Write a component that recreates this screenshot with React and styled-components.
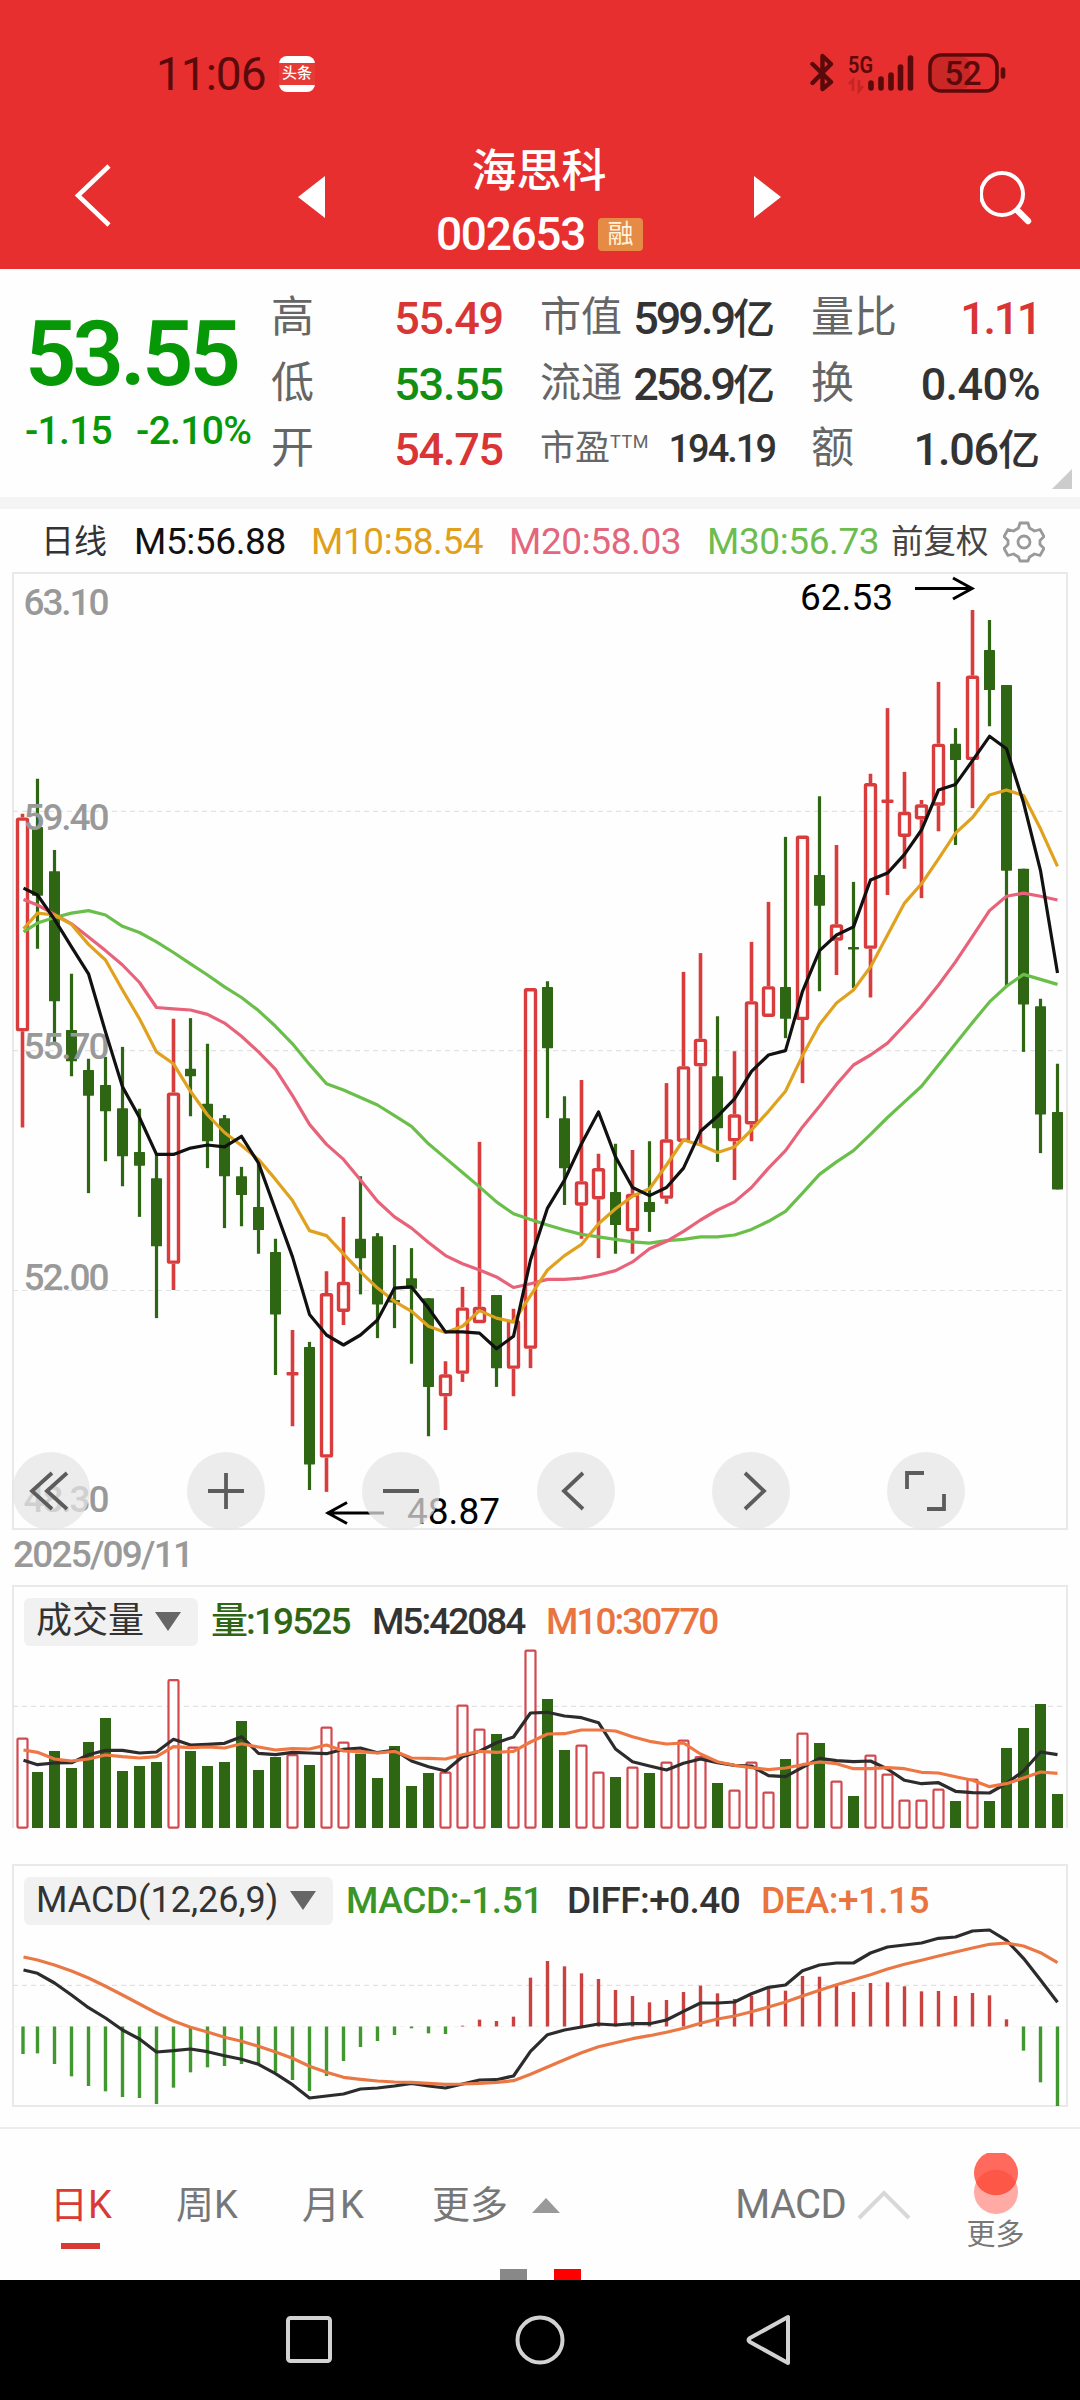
import React from 'react'
import styled, { createGlobalStyle } from 'styled-components'

// 1 = up day (hollow red), 0 = down day (solid green)
// [up, high, low, bodyTop, bodyBottom]
const candles = [
    [1, 406, 908, 412, 754], [0, 350, 622, 427, 537], [0, 464, 772, 498, 706], [0, 662, 826, 752, 802],
    [0, 798, 1013, 816, 857], [0, 795, 962, 840, 882], [0, 779, 1002, 877, 954], [0, 878, 1051, 947, 969],
    [0, 950, 1213, 989, 1098], [1, 734, 1168, 852, 1126], [0, 733, 890, 814, 826], [0, 774, 973, 870, 930],
    [0, 888, 1069, 893, 986], [0, 971, 1066, 986, 1016], [0, 965, 1110, 1035, 1072], [0, 1086, 1304, 1107, 1207],
    [1, 1232, 1386, 1302, 1302], [0, 1251, 1488, 1259, 1447], [1, 1138, 1491, 1173, 1436], [1, 1051, 1224, 1155, 1203],
    [0, 986, 1175, 1086, 1117], [0, 1077, 1245, 1082, 1191], [0, 1096, 1229, 1184, 1188], [0, 1101, 1286, 1149, 1166],
    [0, 1181, 1402, 1181, 1323], [1, 1282, 1392, 1303, 1338], [1, 1163, 1315, 1196, 1302], [1, 931, 1221, 1195, 1221],
    [0, 1176, 1323, 1176, 1293], [1, 1198, 1338, 1216, 1294], [1, 685, 1293, 685, 1262], [0, 674, 893, 683, 781],
    [0, 858, 1032, 893, 973], [1, 832, 1086, 994, 1033], [1, 950, 1117, 973, 1023], [0, 934, 1110, 1011, 1064],
    [1, 944, 1110, 1014, 1074], [0, 930, 1075, 1027, 1043], [1, 837, 1030, 927, 1022], [1, 659, 930, 810, 931],
    [1, 629, 936, 766, 810], [0, 730, 963, 826, 909], [1, 786, 992, 887, 930], [1, 611, 930, 706, 903],
    [1, 547, 731, 682, 731], [0, 443, 765, 683, 734], [1, 441, 837, 441, 736], [0, 378, 690, 504, 553],
    [1, 456, 664, 583, 609], [0, 515, 685, 619, 623], [1, 342, 700, 357, 622], [1, 237, 536, 386, 386],
    [1, 339, 494, 403, 443], [1, 384, 541, 391, 415], [1, 195, 434, 294, 393], [0, 269, 456, 294, 320],
    [1, 80, 397, 185, 320], [0, 96, 266, 144, 208], [0, 200, 683, 200, 497], [0, 494, 787, 494, 711],
    [0, 702, 949, 714, 887], [0, 806, 1007, 883, 1007],
]

const ma5 = [525, 536, 575, 619, 662, 755, 843, 892, 951, 951, 941, 936, 939, 922, 965, 1040, 1115, 1207, 1240, 1256, 1240, 1216, 1165, 1163, 1197, 1235, 1235, 1237, 1262, 1242, 1120, 1037, 992, 934, 883, 955, 1004, 1017, 1004, 973, 914, 890, 862, 818, 792, 785, 690, 625, 600, 587, 512, 501, 471, 432, 368, 359, 321, 282, 302, 388, 497, 661]
const ma10 = [590, 565, 568, 583, 615, 640, 688, 734, 787, 806, 850, 888, 916, 937, 959, 991, 1025, 1073, 1081, 1110, 1139, 1165, 1186, 1202, 1226, 1236, 1226, 1201, 1213, 1219, 1177, 1136, 1113, 1095, 1062, 1038, 1018, 1006, 968, 928, 936, 948, 939, 912, 882, 850, 793, 743, 709, 688, 651, 600, 549, 518, 478, 437, 412, 376, 368, 377, 430, 490]
const ma20 = [543, 552, 567, 582, 603, 625, 648, 676, 716, 718, 720, 727, 741, 762, 787, 815, 857, 903, 935, 959, 992, 1026, 1051, 1069, 1092, 1113, 1126, 1136, 1147, 1164, 1158, 1151, 1151, 1149, 1144, 1137, 1123, 1102, 1090, 1074, 1056, 1040, 1027, 1004, 973, 945, 907, 874, 839, 808, 792, 773, 744, 714, 680, 643, 602, 561, 538, 533, 538, 544]
const ma30 = [595, 581, 572, 565, 561, 568, 586, 596, 611, 628, 646, 664, 683, 700, 721, 746, 774, 807, 838, 848, 860, 872, 889, 906, 934, 957, 980, 1003, 1027, 1046, 1055, 1064, 1072, 1079, 1083, 1087, 1091, 1093, 1089, 1087, 1083, 1083, 1080, 1071, 1058, 1042, 1013, 983, 963, 945, 919, 892, 867, 842, 808, 774, 740, 707, 682, 663, 671, 679]

const volumes = [475, 576, 513, 564, 486, 414, 573, 558, 546, 300, 513, 558, 546, 423, 570, 531, 525, 555, 442, 487, 521, 594, 498, 618, 579, 577, 376, 448, 462, 502, 211, 357, 510, 496, 577, 591, 562, 579, 547, 481, 531, 609, 631, 547, 637, 537, 460, 489, 604, 648, 526, 583, 661, 661, 628, 663, 598, 663, 504, 444, 372, 642]
const vol5 = [541, 554, 549, 548, 524, 511, 511, 519, 516, 478, 495, 493, 490, 470, 520, 524, 517, 519, 521, 508, 504, 518, 510, 543, 560, 573, 530, 514, 488, 471, 399, 397, 408, 413, 428, 507, 545, 558, 570, 550, 537, 548, 556, 558, 587, 590, 562, 535, 542, 545, 543, 567, 601, 611, 608, 634, 638, 639, 610, 573, 516, 524]
const vol10 = [510, 517, 537, 543, 537, 525, 530, 534, 530, 500, 503, 501, 504, 491, 501, 510, 506, 507, 495, 513, 515, 519, 514, 534, 535, 537, 524, 514, 517, 514, 486, 462, 461, 450, 450, 453, 470, 484, 492, 489, 522, 545, 556, 563, 569, 564, 554, 546, 551, 566, 566, 563, 566, 577, 579, 590, 601, 620, 611, 594, 576, 580]

const macd = [612, 610, 642, 679, 708, 724, 741, 744, 762, 713, 667, 652, 648, 642, 645, 667, 690, 723, 678, 633, 591, 573, 555, 535, 550, 552, 527, 509, 513, 500, 383, 333, 349, 370, 387, 420, 438, 457, 450, 426, 407, 430, 447, 437, 415, 422, 378, 380, 403, 426, 399, 397, 409, 424, 423, 438, 429, 436, 508, 602, 697, 768]
const diff = [360, 370, 399, 435, 473, 504, 540, 567, 606, 602, 597, 605, 617, 628, 643, 671, 704, 744, 738, 732, 717, 714, 708, 700, 708, 714, 702, 690, 689, 678, 604, 554, 540, 531, 522, 525, 521, 521, 510, 484, 459, 459, 456, 431, 412, 405, 362, 345, 339, 339, 309, 291, 285, 279, 265, 261, 243, 240, 271, 325, 390, 457]
const dea = [321, 330, 345, 363, 384, 409, 435, 462, 489, 513, 532, 546, 562, 574, 589, 606, 625, 649, 667, 682, 688, 693, 696, 697, 700, 703, 702, 700, 697, 692, 673, 651, 629, 608, 590, 578, 566, 557, 547, 535, 520, 507, 498, 485, 471, 456, 438, 421, 404, 389, 374, 357, 343, 331, 318, 306, 294, 283, 279, 288, 308, 338]

const RED = '#d93c3c'
const GREEN = '#2f6614'

// the first day sits a little closer to its neighbour than the rest
const dayX = i => (i === 0 ? 22.5 : 20.5 + 17 * i)
const priceY = v => v * 0.625 - 12
const volY = v => v / 3 - 5
const macdY = v => v / 3 - 14

const points = (data, toY) => data.map((v, i) => `${i === 0 ? 23.5 : dayX(i)},${toY(v).toFixed(1)}`).join(' ')

const Line = ({ data, toY, color }) => (
    <polyline points={points(data, toY)} fill="none" stroke={color} strokeWidth="3.2" strokeLinejoin="round" />
)

const Grid = ({ y }) => <line x1="13" x2="1064" y1={y} y2={y} stroke="#e2e2e2" strokeWidth="1.2" strokeDasharray="5 4" />

const Candle = ({ i, data }) => {
    const [up, high, low, top, bottom] = data
    const x = dayX(i)
    const [h, l, t, b] = [high, low, top, bottom].map(priceY)
    if (!up) {
        return (
            <g fill={GREEN}>
                <rect x={x - 1.6} y={h} width="3.2" height={l - h} />
                <rect x={x - 5.5} y={t} width="11" height={b - t} rx=".6" />
            </g>
        )
    }
    if (top === bottom) {
        return (
            <g fill={RED}>
                <rect x={x - 1.8} y={h} width="3.6" height={l - h} />
                <rect x={x - 6} y={t - 1.7} width="12" height="3.4" rx="1" />
            </g>
        )
    }
    return (
        <g>
            <rect x={x - 1.8} y={h} width="3.6" height={t - h} fill={RED} />
            <rect x={x - 1.8} y={b} width="3.6" height={Math.max(0, l - b)} fill={RED} />
            <rect x={x - 5} y={t + 1.6} width="10" height={b - t - 3.2} rx="1" fill="none" stroke={RED} strokeWidth="3.4" />
        </g>
    )
}

const PriceLabel = ({ x = 23.5, y, children, color = '#999', weight = 500, length = 86 }) => (
    <text x={x} y={y} fontSize="37" fontWeight={weight} fill={color} textLength={length}>{children}</text>
)

const PriceChart = () => (
    <Chart width="1080" height="959" viewBox="0 0 1080 959">
        <rect x="13" y="1" width="1054" height="956" fill="none" stroke="#e9e9e9" strokeWidth="2" />
        <Grid y={239.3} />
        <Grid y={478.7} />
        <Grid y={718.5} />
        {candles.map((c, i) => <Candle key={i} i={i} data={c} />)}
        <PriceLabel y={43}>63.10</PriceLabel>
        <PriceLabel y={257.5}>59.40</PriceLabel>
        <PriceLabel y={486.5}>55.70</PriceLabel>
        <PriceLabel y={718}>52.00</PriceLabel>
        <PriceLabel y={940}>48.30</PriceLabel>
        <Line data={ma30} toY={priceY} color="#6abf4b" />
        <Line data={ma20} toY={priceY} color="#e8637a" />
        <Line data={ma10} toY={priceY} color="#e0a21e" />
        <Line data={ma5} toY={priceY} color="#111" />
        <PriceLabel x={800} y={38} color="#000" weight={400} length={93}>62.53</PriceLabel>
        <path d="M915 16.5h57M953 6l19 10.5-19 10.5" fill="none" stroke="#000" strokeWidth="3" />
        <PriceLabel x={407} y={951.5} color="#000" weight={400} length={93}>48.87</PriceLabel>
        <path d="M384 941h-57M347 930.5l-19 10.5 19 10.5" fill="none" stroke="#000" strokeWidth="3" />
    </Chart>
)

const VolumeChart = () => (
    <Chart width="1080" height="245" viewBox="0 0 1080 245">
        <path d="M13 243V1H1067V243" fill="none" stroke="#e9e9e9" strokeWidth="2" />
        <Grid y={121.3} />
        {volumes.map((v, i) => {
            const up = candles[i][0]
            const y = volY(v)
            return up
                ? <rect key={i} x={dayX(i) - 5} y={y + 0.2} width="10" height={242.4 - y} rx="1" fill="#fff" stroke="#d14a50" strokeWidth="2.2" />
                : <rect key={i} x={dayX(i) - 5.5} y={y} width="11" height={243 - y} fill={GREEN} />
        })}
        <Line data={vol5} toY={volY} color="#2c2c2c" />
        <Line data={vol10} toY={volY} color="#ee7743" />
    </Chart>
)

const MacdChart = () => (
    <Chart width="1080" height="243" viewBox="0 0 1080 243">
        <rect x="13" y="1" width="1054" height="241" fill="none" stroke="#e9e9e9" strokeWidth="2" />
        <Grid y={121.3} />
        <line x1="13" x2="1064" y1="162.5" y2="162.5" stroke="#f3f3f3" strokeWidth="1" strokeDasharray="5 4" />
        {macd.map((v, i) => {
            const y = macdY(v)
            const x = i === 0 ? 23 : dayX(i)
            return <rect key={i} x={x - 1.7} y={Math.min(y, 162.5)} width="3.4" height={Math.abs(y - 162.5)} fill={v > 530 ? '#429830' : '#c9423f'} />
        })}
        <Line data={diff} toY={macdY} color="#2c2c2c" />
        <Line data={dea} toY={macdY} color="#e97845" />
    </Chart>
)

const StatusIcons = () => (
    <svg width="204" height="44" viewBox="0 0 204 44" fill="none" stroke="#5a0a0b">
        <path d="M2.5 12L21 30L12.500 37V23M12.500 19V4L21 12L2.500 31" strokeWidth="4.4" strokeLinejoin="round" strokeLinecap="round" />
        <text x="38" y="20.500" fontSize="24" fontWeight="600" fill="#5a0a0b" stroke="none" textLength="25" lengthAdjust="spacingAndGlyphs">5G</text>
        <path d="M39 32l4-4v11M49 28v11l4-5" strokeWidth="2.6" opacity=".25" />
        <path d="M61 31v5M71 27v9M81 23v13M90.5 15v21M100.5 6v30" strokeWidth="5.6" strokeLinecap="round" />
        <rect x="122" y="5" width="38" height="32" rx="8" fill="#5a0a0b" opacity=".2" stroke="none" />
        <rect x="120" y="3" width="67" height="36" rx="11" strokeWidth="3.6" />
        <path d="M193 17.5v7" strokeWidth="4.6" strokeLinecap="round" />
        <text x="134.500" y="33" fontSize="33" fontWeight="500" fill="#5a0a0b" stroke="none" textLength="37">52</text>
    </svg>
)

const Gear = () => (
    <svg width="42" height="42" viewBox="0 0 42 42" fill="none" stroke="#999" strokeWidth="2.8" strokeLinejoin="round">
        <path d="M17 2h8l1.500 5 5 3 5.500-1.500 4 7-4 4v4l4 4-4 7-5.500-1.500-5 3L25 40h-8l-1.500-4-5-3L5 34.500l-4-7 4-4v-4l-4-4 4-7L10.500 10l5-3z" />
        <circle cx="21" cy="21" r="6" />
    </svg>
)

const chartButtons = [
    'M40 -18L20 0L40 18M55 -18L35 0L55 18',
    'M21 0H57M39 -18V18',
    'M21 0H57',
    'M46 -18L27 0L46 18',
    'M33 -18L52 0L33 18',
    'M20 -2V-18H37M57 3V18H40',
]

const tabs = ['日K', '周K', '月K']

const App = () => (
    <Page>
        <GlobalStyle />
        <Header>
            <StatusBar>
                <Clock>11:06</Clock>
                <NewsIcon><NewsBand>头条</NewsBand></NewsIcon>
                <Spacer />
                <StatusIcons />
            </StatusBar>
            <TitleBar>
                <svg width="40" height="66" viewBox="0 0 40 66" fill="none" stroke="#fff" strokeWidth="4.5"><path d="M36 3L5 32.500L36 62" /></svg>
                <svg width="27" height="42" viewBox="0 0 27 42"><path d="M27 0v42L0 21z" fill="#fff" /></svg>
                <TitleText>
                    <StockName>海思科</StockName>
                    <CodeRow><Code>002653</Code><Badge>融</Badge></CodeRow>
                </TitleText>
                <svg width="27" height="42" viewBox="0 0 27 42"><path d="M0 0v42l27-21z" fill="#fff" /></svg>
                <svg width="56" height="58" viewBox="0 0 56 58" fill="none" stroke="#fff">
                    <circle cx="22" cy="24" r="21" strokeWidth="4" />
                    <path d="M38 41l10 10" strokeWidth="6.4" strokeLinecap="round" />
                </svg>
            </TitleBar>
        </Header>

        <Quote>
            <Current>
                <BigPrice>53.55</BigPrice>
                <Change><span>-1.15</span><span>-2.10%</span></Change>
            </Current>
            <QuoteTable>
                <Label>高</Label><Value $color="#d93535">55.49</Value>
                <Label $size={41}>市值</Label><Value $spacing={-3}>599.9<Unit>亿</Unit></Value>
                <Label>量比</Label><Value $color="#d93535" $spacing={-2.4}>1.11</Value>
                <Label>低</Label><Value $color="#128f12">53.55</Value>
                <Label $size={41}>流通</Label><Value $spacing={-3}>258.9<Unit>亿</Unit></Value>
                <Label>换</Label><Value $spacing={-0.6}>0.40%</Value>
                <Label>开</Label><Value $color="#d93535">54.75</Value>
                <Label $size={35}>市盈<Ttm>TTM</Ttm></Label><Value $size={38} $spacing={-2}>194.19</Value>
                <Label>额</Label><Value $spacing={-1.2}>1.06<Unit>亿</Unit></Value>
            </QuoteTable>
            <Corner />
        </Quote>

        <AverageRow>
            <Average $color="#333" $size={33}>日线</Average>
            <Average $color="#111">M5:56.88</Average>
            <Average $color="#e0a01a">M10:58.54</Average>
            <Average $color="#e3667c">M20:58.03</Average>
            <Average $color="#6cbd4e">M30:56.73</Average>
            <Average $color="#444" $size={32.5}>前复权</Average>
            <Gear />
        </AverageRow>

        <ChartPanel $height={959}>
            <PriceChart />
            <ButtonBar>
                {chartButtons.map(d => (
                    <RoundButton key={d}>
                        <svg width="78" height="78" viewBox="0 -39 78 78" fill="none" stroke="#5c5c5c" strokeWidth="3.8"><path d={d} /></svg>
                    </RoundButton>
                ))}
            </ButtonBar>
        </ChartPanel>
        <DateRow>2025/09/11</DateRow>

        <ChartPanel $height={279}>
            <VolumeChart />
            <Indicators>
                <Select $width={174}>成交量<Caret /></Select>
                <Indicator $color={GREEN} $width={161} $spacing={-1.9}>量:19525</Indicator>
                <Indicator $color="#333" $width={174} $spacing={-2}>M5:42084</Indicator>
                <Indicator $color="#ea7440" $spacing={-2}>M10:30770</Indicator>
            </Indicators>
        </ChartPanel>
        <ChartPanel $height={263}>
            <MacdChart />
            <Indicators>
                <Select $width={309}>MACD(12,26,9)<Caret /></Select>
                <Indicator $color="#3a9428" $width={221} $spacing={-0.4}>MACD:-1.51</Indicator>
                <Indicator $color="#333" $width={194}>DIFF:+0.40</Indicator>
                <Indicator $color="#ea7440">DEA:+1.15</Indicator>
            </Indicators>
        </ChartPanel>

        <TabBar>
            {tabs.map((name, i) => <Tab key={name} $active={i === 0}>{name}</Tab>)}
            <MoreTab>更多<svg width="28" height="15" viewBox="0 0 28 15"><path d="M14 0L28 15H0z" fill="#999" /></svg></MoreTab>
            <Spacer />
            <MacdTab>
                MACD
                <svg width="54" height="30" viewBox="0 0 54 30" fill="none" stroke="#d8d8d8" strokeWidth="4"><path d="M2 28L27 3L52 28" /></svg>
            </MacdTab>
            <Assistant>
                <svg width="46" height="62" viewBox="0 0 46 62">
                    <circle cx="23" cy="39" r="22" fill="#ffaaa5" />
                    <path d="M14 0H32A22 22 0 1 1 14 0z" fill="#ff6a5c" />
                    <path d="M3 29.500A22 22 0 0 1 43 29.500A22 22 0 0 1 3 29.500z" fill="#fd5748" />
                </svg>
                更多
            </Assistant>
        </TabBar>
        <Pager><Dot $color="#888" /><Dot $color="#f00" /></Pager>

        <NavBar>
            <svg width="48" height="50" viewBox="0 0 48 50"><rect x="3" y="3" width="42" height="43" rx="2.5" /></svg>
            <svg width="50" height="50" viewBox="0 0 50 50"><circle cx="25" cy="25" r="22.5" /></svg>
            <svg width="46" height="52" viewBox="0 0 46 52"><path d="M42 3V49L4 28Q1 26 4 24z" strokeLinejoin="round" /></svg>
        </NavBar>
    </Page>
)

const GlobalStyle = createGlobalStyle`
    * {
        box-sizing: border-box;
    }
    body {
        margin: 0;
        background: #fff;
        font-family: Roboto, 'Noto Sans CJK SC', sans-serif;
    }
    svg {
        display: block;
        flex: none;
    }
`
const Page = styled.div`
    width: 1080px;
    height: 2400px;
    display: flex;
    flex-direction: column;
    overflow: hidden;
    background: #fefefe;
    white-space: nowrap;
`
const Header = styled.header`
    height: 269px;
    flex: none;
    background: #e72f2f;
    color: #fff;
`
const StatusBar = styled.div`
    height: 146px;
    display: flex;
    align-items: center;
    padding: 2px 66px 0 156px;
`
const Clock = styled.div`
    width: 123px;
    font-size: 46px;
    letter-spacing: -1px;
    color: #5a0a0b;
`
const NewsIcon = styled.div`
    width: 36px;
    height: 36px;
    border-radius: 8px;
    background: #fff;
    display: flex;
    align-items: center;
`
const NewsBand = styled.div`
    width: 36px;
    height: 22px;
    background: #e63a35;
    font-size: 15px;
    font-weight: 500;
    line-height: 21px;
    text-align: center;
`
const Spacer = styled.div`
    flex: 1;
`
const TitleBar = styled.div`
    height: 123px;
    display: grid;
    grid-template-columns: 225px 27px 429px 27px 199px 56px;
    padding-left: 73px;
    align-items: start;
    &>svg {
        margin-top: 17px;
    }
    &>svg:nth-child(2), &>svg:nth-child(4) {
        margin-top: 30px;
    }
    &>svg:last-child {
        margin-top: 24px;
        grid-column: 6;
    }
`
const TitleText = styled.div`
    display: flex;
    flex-direction: column;
    align-items: center;
`
const StockName = styled.div`
    font-size: 45px;
    font-weight: 500;
    line-height: 50px;
    padding: 1px 1px 0 0;
`
const CodeRow = styled.div`
    display: flex;
    align-items: center;
    margin-top: 12px;
    gap: 13px;
`
const Code = styled.div`
    font-size: 46px;
    font-weight: 500;
    line-height: 50px;
    letter-spacing: -1.3px;
`
const Badge = styled.div`
    width: 45px;
    height: 33px;
    border-radius: 4px;
    background: #e68b45;
    color: #fff3dc;
    font-size: 26px;
    line-height: 32px;
    text-align: center;
`
const Quote = styled.section`
    height: 240px;
    flex: none;
    display: flex;
    border-bottom: 12px solid #f4f4f4;
    position: relative;
`
const Current = styled.div`
    width: 271px;
    padding: 40px 0 0 25px;
    color: #079807;
`
const BigPrice = styled.div`
    font-size: 90px;
    font-weight: 600;
    line-height: 92px;
    letter-spacing: -3.8px;
`
const Change = styled.div`
    display: flex;
    gap: 24px;
    margin-top: 7px;
    font-size: 39px;
    font-weight: 500;
    line-height: 46px;
    letter-spacing: -.7px;
`
const QuoteTable = styled.div`
    display: grid;
    grid-template-columns: 60px 172px 110px 162px 115px 150px;
    grid-template-rows: repeat(3, 65.5px);
    column-gap: 0;
    padding-top: 16px;
    /* gutters between the three label / value pairs */
    &>:nth-child(6n + 3) { margin-left: 37px; }
    &>:nth-child(6n + 5) { margin-left: 36px; }
`
const Label = styled.div`
    font-size: ${p => p.$size || 43}px;
    line-height: 65px;
    color: #666;
    width: 0;
`
const Ttm = styled.sup`
    font-size: 18px;
    line-height: 1;
    letter-spacing: .5px;
    vertical-align: 12px;
`
const Value = styled.div`
    font-size: ${p => p.$size || 45}px;
    font-weight: 500;
    line-height: 67px;
    letter-spacing: ${p => p.$spacing || -1.2}px;
    text-align: right;
    color: ${p => p.$color || '#333'};
`
const Unit = styled.span`
    font-size: 42px;
    letter-spacing: 0;
`
const Corner = styled.div`
    position: absolute;
    right: 8px;
    bottom: 8px;
    border-left: 20px solid transparent;
    border-bottom: 20px solid #ccc;
`
const AverageRow = styled.div`
    height: 63px;
    flex: none;
    display: grid;
    grid-template-columns: 93px 177px 198px 198px 184px 112px 42px;
    align-items: center;
    padding-left: 41px;
    padding-top: 2px;
`
const Average = styled.div`
    font-size: ${p => p.$size || 37}px;
    line-height: 60px;
    letter-spacing: ${p => (p.$size ? 0 : -0.4)}px;
    color: ${p => p.$color};
`
const ChartPanel = styled.section`
    height: ${p => p.$height}px;
    flex: none;
    position: relative;
`
const Chart = styled.svg`
    overflow: visible;
`
const ButtonBar = styled.div`
    position: absolute;
    left: 12px;
    bottom: 1px;
    display: flex;
    gap: 97px;
`
const RoundButton = styled.div`
    width: 78px;
    height: 78px;
    border-radius: 50%;
    background: rgba(229, 229, 229, .72);
`
const DateRow = styled.div`
    height: 54px;
    flex: none;
    padding: 2px 0 0 13px;
    font-size: 37px;
    font-weight: 500;
    line-height: 44px;
    letter-spacing: -1.8px;
    color: #999;
`
const Indicators = styled.div`
    position: absolute;
    left: 24px;
    top: 12px;
    display: flex;
    align-items: center;
    font-size: 37px;
    font-weight: 500;
    line-height: 49px;
`
const Select = styled.div`
    width: ${p => p.$width}px;
    height: 48px;
    margin-right: 13px;
    padding: 0 17px 0 12px;
    display: flex;
    align-items: center;
    justify-content: space-between;
    border-radius: 6px;
    background: #f1f1f1;
    color: #333;
    font-size: 36px;
    font-weight: 400;
`
const Caret = styled.i`
    border: 13px solid transparent;
    border-top: 19px solid #666;
    border-bottom: 0;
`
const Indicator = styled.div`
    width: ${p => (p.$width ? p.$width + 'px' : 'auto')};
    color: ${p => p.$color};
    letter-spacing: ${p => p.$spacing || -0.6}px;
`
const TabBar = styled.nav`
    height: 142px;
    flex: none;
    display: flex;
    align-items: flex-start;
    border-top: 2px solid #ededed;
    padding-left: 50px;
    font-size: 38px;
    color: #777;
`
const Tab = styled.div`
    width: 126px;
    padding-top: 48px;
    line-height: 56px;
    color: ${p => (p.$active ? '#d93a36' : '#777')};
    &::after {
        content: '';
        display: block;
        width: 39px;
        height: 6px;
        margin: 10px 0 0 11px;
        background: ${p => (p.$active ? '#d93a36' : 'transparent')};
    }
`
const MoreTab = styled.div`
    padding-top: 48px;
    margin-left: 4px;
    line-height: 56px;
    display: flex;
    align-items: center;
    gap: 24px;
`
const MacdTab = styled.div`
    padding-top: 48px;
    font-size: 40px;
    line-height: 56px;
    letter-spacing: -.7px;
    display: flex;
    align-items: center;
    gap: 11px;
`
const Assistant = styled.div`
    width: 169px;
    padding-top: 24px;
    display: flex;
    flex-direction: column;
    align-items: center;
    font-size: 29px;
    line-height: 40px;
`
const Pager = styled.div`
    height: 11px;
    flex: none;
    display: flex;
    justify-content: center;
    gap: 27px;
`
const Dot = styled.i`
    width: 27px;
    background: ${p => p.$color};
`
const NavBar = styled.footer`
    height: 120px;
    flex: none;
    display: flex;
    align-items: center;
    justify-content: space-between;
    padding: 0 288px 0 285px;
    background: #000;
    &>svg {
        fill: none;
        stroke: #d2d2d2;
        stroke-width: 4;
    }
`
export default App
